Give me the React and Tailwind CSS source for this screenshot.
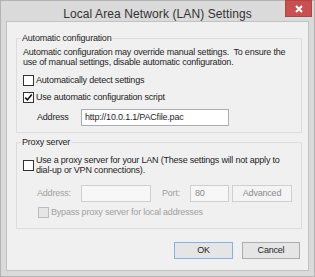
import React from 'react'

const FONT = "font-['Liberation_Sans',Arial,sans-serif]"

function Check({ checked, disabled }) {
  return (
    <span
      className={
        'flex w-[11px] h-[11px] shrink-0 items-center justify-center border ' +
        (disabled ? 'border-[#bcbcbc] bg-[#e6e6e6]' : 'border-[#333333] bg-white')
      }
    >
      {checked && (
        <svg width="9" height="9" viewBox="0 0 9 9">
          <path d="M1.2 4.6 L3.4 6.9 L7.8 1.6" fill="none" stroke="#111" strokeWidth="1.6" />
        </svg>
      )}
    </span>
  )
}

function Button({ children, primary, disabled, className = '' }) {
  return (
    <div
      className={
        'flex h-[17px] items-center justify-center border text-[9px] ' +
        (primary
          ? 'border-[#7eb4ea] bg-[#e5e5e5] text-[#1e1e1e] '
          : disabled
          ? 'border-[#cfcfcf] bg-[#f4f4f4] text-[#8b8b8b] '
          : 'border-[#acacac] bg-[#e5e5e5] text-[#1e1e1e] ') +
        className
      }
    >
      {children}
    </div>
  )
}

export default function App() {
  return (
    <div className={`w-[315px] h-[277px] border border-[#b4b4b4] bg-[#dadada] ${FONT}`}>
      {/* title bar */}
      <div className="relative h-[20px] flex items-center justify-center">
        <span className="text-[12px] text-[#333333] leading-none mt-[5px] tracking-[0.1px]">Local Area Network (LAN) Settings</span>
        <div className="absolute right-[2px] -top-px w-[27px] h-[17px] bg-[#c75050] border border-[#b44242] flex items-center justify-center">
          <svg width="8" height="8" viewBox="0 0 8 8">
            <path d="M1 1 L7 7 M7 1 L1 7" stroke="#fff" strokeWidth="2" />
          </svg>
        </div>
      </div>

      {/* client area */}
      <div className="ml-[5px] w-[303px] h-[250px] border border-[#c2c2c2] bg-[#f0f0f0] text-[9px] tracking-[-0.2px] text-[#1e1e1e] pt-[11px]">
        <fieldset className="ml-[9px] w-[286px] border border-[#dcdcdc] pl-[6px] pr-[2px] pb-[6px]">
          <legend className="-ml-[2px] px-[1px] leading-[11px]">Automatic configuration</legend>
          <p className="mt-[3px] leading-[10px] whitespace-nowrap">
            Automatic configuration may override manual settings.&nbsp; To ensure the
            <br />
            use of manual settings, disable automatic configuration.
          </p>
          <div className="mt-[8px] flex items-center gap-[2px] leading-[11px]">
            <Check />
            <span>Automatically detect settings</span>
          </div>
          <div className="mt-[6px] flex items-center gap-[2px] leading-[11px]">
            <Check checked />
            <span>Use automatic configuration script</span>
          </div>
          <div className="mt-[6px] flex items-center">
            <span className="ml-[14px] w-[44px]">Address</span>
            <div className="w-[148px] h-[17px] border border-[#abadb3] bg-white flex items-center pl-[3px]">
              http://10.0.1.1/PACfile.pac
            </div>
          </div>
        </fieldset>

        <fieldset className="mt-[4px] ml-[9px] w-[286px] border border-[#dcdcdc] pl-[6px] pr-[4px] pb-[10px]">
          <legend className="-ml-[2px] px-[1px] leading-[11px]">Proxy server</legend>
          <div className="mt-[7px] flex items-center gap-[2px]">
            <Check />
            <span className="leading-[10px]">
              Use a proxy server for your LAN (These settings will not apply to dial-up or VPN connections).
            </span>
          </div>
          <div className="mt-[10px] flex items-center text-[#a0a0a0]">
            <span className="ml-[14px] w-[44px]">Address:</span>
            <div className="w-[70px] h-[17px] border border-[#cfcfcf] bg-[#f7f7f7]" />
            <span className="ml-[11px] w-[28px]">Port:</span>
            <div className="w-[39px] h-[17px] border border-[#cfcfcf] bg-[#f7f7f7] flex items-center pl-[4px] text-[#8b8b8b]">80</div>
            <Button disabled className="ml-[3px] w-[60px]">Advanced</Button>
          </div>
          <div className="mt-[5px] ml-[15px] flex items-center gap-[2px] leading-[11px] text-[#a0a0a0]">
            <Check disabled />
            <span>Bypass proxy server for local addresses</span>
          </div>
        </fieldset>

        <div className="mt-[13px] flex justify-end gap-[9px] pr-[8px]">
          <Button primary className="w-[59px]">OK</Button>
          <Button className="w-[58px]">Cancel</Button>
        </div>
      </div>
    </div>
  )
}
